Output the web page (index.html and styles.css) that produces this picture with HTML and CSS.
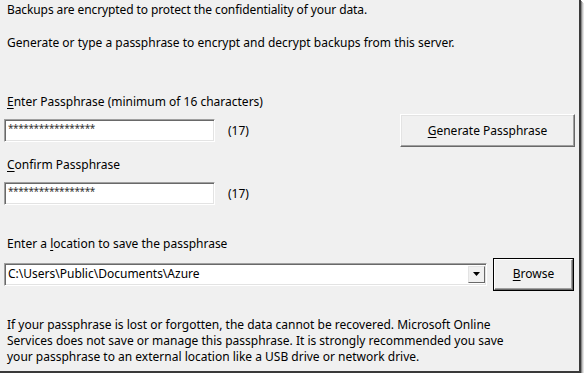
FILE: index.html
```html
<!DOCTYPE html>
<html>
<head>
<meta charset="utf-8">
<link rel="stylesheet" href="styles.css">
</head>
<body>
<div class="window">
  <p class="text intro1">Backups are encrypted to protect the confidentiality of your data.</p>
  <p class="text intro2">Generate or type a passphrase to encrypt and decrypt backups from this server.</p>

  <p class="text label label-enter"><u>E</u>nter Passphrase (minimum of 16 characters)</p>
  <div class="row row-enter">
    <div class="field"><span class="stars">*****************</span></div>
    <span class="count">(17)</span>
    <button class="btn btn-generate"><u>G</u>enerate Passphrase</button>
  </div>

  <p class="text label label-confirm"><u>C</u>onfirm Passphrase</p>
  <div class="row row-confirm">
    <div class="field"><span class="stars">*****************</span></div>
    <span class="count">(17)</span>
  </div>

  <p class="text label label-location">Enter a <u>l</u>ocation to save the passphrase</p>
  <div class="row row-location">
    <div class="combo">
      <span class="combo-value">C:\Users\Public\Documents\Azure</span>
      <span class="combo-drop"><svg width="7" height="4" viewBox="0 0 7 4"><polygon points="0,0 7,0 3.5,4" fill="#000"/></svg></span>
    </div>
    <button class="btn btn-browse"><span class="btn-inner"><u>B</u>rowse</span></button>
  </div>

  <p class="text note">If your passphrase is lost or forgotten, the data cannot be recovered. Microsoft Online<br>Services does not save or manage this passphrase. It is strongly recommended you save<br>your passphrase to an external location like a USB drive or network drive.</p>
</div>
</body>
</html>
```

FILE: styles.css
```css
html, body {
  margin: 0;
  padding: 0;
  background: #ffffff;
}

.window {
  box-sizing: border-box;
  width: 581px;
  height: 373px;
  background: #f0f0f0;
  border-right: 2px solid #3a3a3a;
  border-bottom: 2px solid #3a3a3a;
  box-shadow: 1px 1px 0 #8a8a8a, 2px 2px 0 #c4c4c4, 3px 3px 0 #e4e4e4;
  padding: 2px 0 0 4px;
  font-family: "Noto Sans", "Open Sans", sans-serif;
  font-size: 12px;
  line-height: 16px;
  color: #000;
}

.text {
  margin: 0;
  padding-left: 3px;
  white-space: nowrap;
}

.intro1 { letter-spacing: -0.1px; }

u {
  text-decoration: underline;
  text-underline-offset: 2px;
}

.intro2 { margin-top: 17px; }
.label-enter { margin-top: 43px; }
.label-confirm { margin-top: 10px; }
.label-location { margin-top: 31px; }
.note { margin-top: 26px; }

.row {
  display: flex;
  align-items: center;
}

.row-enter {
  height: 33px;
  margin-top: 4px;
}

.row-confirm {
  height: 23px;
  margin-top: 9px;
}

.row-location {
  height: 34px;
  margin-top: 5px;
}

.field {
  box-sizing: border-box;
  width: 211px;
  height: 23px;
  background: #fff;
  border: 1px solid;
  border-color: #a0a0a0 #ffffff #ffffff #a0a0a0;
  box-shadow: inset 1px 1px 0 #696969, inset -1px -1px 0 #e3e3e3;
  padding: 0 0 0 3px;
  display: flex;
  align-items: flex-start;
}

.stars {
  font-size: 10px;
  line-height: 16px;
  letter-spacing: -0.4px;
  color: #333;
}

.count {
  margin-left: 13px;
  width: 40px;
}

.btn {
  font-family: inherit;
  font-size: 12px;
  line-height: 16px;
  color: #000;
  background: #f0f0f0;
  padding: 0;
  margin: 0;
  box-sizing: border-box;
  border: 1px solid;
  border-color: #ffffff #696969 #696969 #ffffff;
  box-shadow: inset -1px -1px 0 #a0a0a0, inset 1px 1px 0 #e3e3e3;
}

.btn-generate {
  width: 175px;
  height: 33px;
  margin-left: 132px;
}

.combo {
  box-sizing: border-box;
  width: 483px;
  height: 23px;
  background: #fff;
  border: 1px solid;
  border-color: #a0a0a0 #ffffff #ffffff #a0a0a0;
  box-shadow: inset 1px 1px 0 #696969, inset -1px -1px 0 #e3e3e3;
  display: flex;
  align-items: center;
  padding: 0 1px 0 3px;
}

.combo-value {
  flex: 1;
  line-height: 16px;
}

.combo-drop {
  box-sizing: border-box;
  width: 17px;
  height: 17px;
  background: #f0f0f0;
  border: 1px solid;
  border-color: #e3e3e3 #696969 #696969 #e3e3e3;
  display: flex;
  align-items: center;
  justify-content: center;
}

.btn-browse {
  width: 81px;
  height: 33px;
  margin-left: 6px;
  border: 1px solid #000;
  box-shadow: none;
  display: flex;
  padding: 0;
}

.btn-inner {
  flex: 1;
  display: flex;
  align-items: center;
  justify-content: center;
  border: 1px solid;
  border-color: #ffffff #696969 #696969 #ffffff;
  box-shadow: inset -1px -1px 0 #a0a0a0;
}
```
